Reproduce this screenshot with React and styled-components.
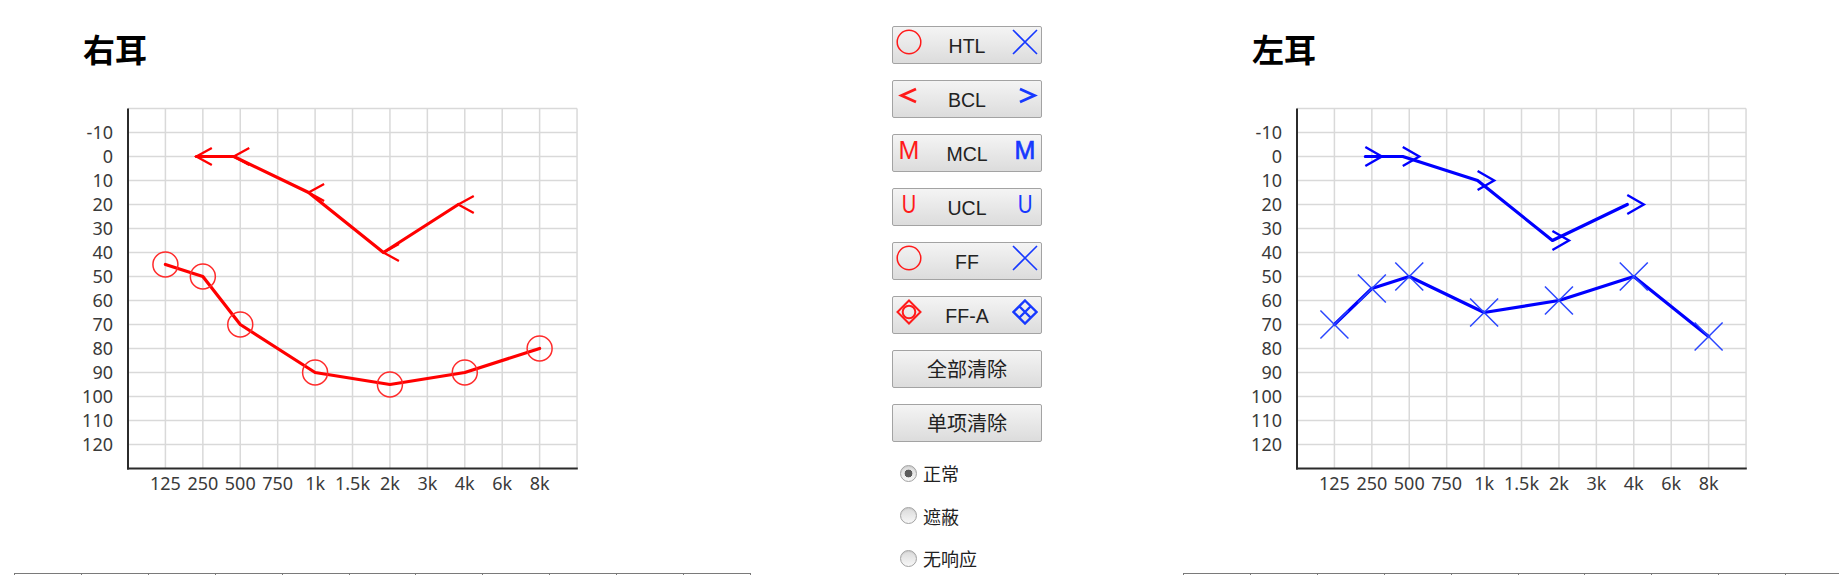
import React from 'react';
import styled, { createGlobalStyle } from 'styled-components';

const GlobalStyle = createGlobalStyle`
  html, body {
    margin: 0;
    padding: 0;
    overflow: hidden;
    background: #ffffff;
  }
  body {
    font-family: "Noto Sans", "Noto Sans CJK SC", sans-serif;
  }
`;

const Page = styled.div`
  display: flex;
  align-items: flex-start;
  gap: 141px;
  padding-left: 14px;
  width: max-content;
`;

const EarPanel = styled.section`
  flex: 0 0 737px;
  display: flex;
  flex-direction: column;
`;

const EarTitle = styled.h2`
  margin: 32px 0 0 69px;
  font-family: "Noto Sans CJK SC", sans-serif;
  font-weight: 700;
  font-size: 32px;
  line-height: 32px;
  color: #000;
`;

const ChartSvg = styled.svg`
  display: block;
  margin-top: 36px;
  width: 600px;
  height: 400px;
  overflow: visible;
`;

const GridLine = styled.line`
  stroke: #d9d9d9;
  stroke-width: 1.5;
`;

const AxisLine = styled.line`
  stroke: #2b2b2b;
  stroke-width: 2;
`;

const AxisLabel = styled.text`
  font-family: "Noto Sans", sans-serif;
  font-size: 18px;
  fill: #3a3a3a;
`;

const Trace = styled.polyline`
  fill: none;
  stroke: ${(p) => p.$color};
  stroke-width: 3.2;
  stroke-linejoin: round;
  stroke-linecap: round;
`;

const MarkerStroke = styled.path`
  fill: none;
  stroke: ${(p) => p.$color};
  stroke-width: ${(p) => p.$w || 1.5};
  stroke-linejoin: miter;
`;

const MarkerCircle = styled.circle`
  fill: none;
  stroke: ${(p) => p.$color};
  stroke-width: 1.5;
`;

const DataTable = styled.table`
  margin-top: 73px;
  border-collapse: collapse;
  table-layout: fixed;
  width: 737px;
`;

const Cell = styled.td`
  border: 1px solid #7a7a7a;
  height: 30px;
  padding: 0;
`;

const ControlColumn = styled.div`
  flex: 0 0 150px;
  display: flex;
  flex-direction: column;
  padding-top: 26px;
`;

const ButtonStack = styled.div`
  display: flex;
  flex-direction: column;
  gap: 16px;
`;

const ToolButton = styled.button`
  box-sizing: border-box;
  width: 150px;
  height: 38px;
  display: flex;
  align-items: center;
  justify-content: ${(p) => (p.$plain ? 'center' : 'space-between')};
  padding: 0 3px;
  border: 1px solid #a3a3a3;
  border-radius: 2px;
  background: linear-gradient(#f4f4f4, #dcdcdc);
  font-family: ${(p) =>
    p.$plain ? '"Noto Sans CJK SC", sans-serif' : '"Liberation Sans", Arial, sans-serif'};
  font-size: ${(p) => (p.$plain ? '20px' : '19.5px')};
  color: #222;
  cursor: pointer;
`;

const ButtonLabel = styled.span`
  flex: 1;
  text-align: center;
  line-height: 1;
  padding-top: ${(p) => (p.$plain ? '0' : '3px')};
`;

const Glyph = styled.span`
  flex: 0 0 26px;
  height: 26px;
  margin-bottom: 6px;
  display: flex;
  align-items: center;
  justify-content: center;
`;

const GlyphLetter = styled.span`
  font-family: "Liberation Sans", Arial, sans-serif;
  font-size: 25px;
  line-height: 1;
  font-weight: 400;
  color: ${(p) => p.$color};
  -webkit-text-stroke: ${(p) => (p.$heavy ? '0.7px' : '0')} ${(p) => p.$color};
  transform: scaleX(${(p) => p.$squeeze || 1});
`;

const RadioGroup = styled.div`
  display: flex;
  flex-direction: column;
  gap: 22px;
  margin-top: 21px;
  padding-left: 7.5px;
`;

const RadioRow = styled.label`
  display: flex;
  align-items: center;
  gap: 6.5px;
  height: 20.5px;
  font-family: "Noto Sans CJK SC", sans-serif;
  font-size: 18px;
  color: #222;
`;

const RadioInput = styled.input.attrs({ type: 'radio' })`
  appearance: none;
  -webkit-appearance: none;
  margin: 0;
  width: 17px;
  height: 17px;
  box-sizing: border-box;
  border-radius: 50%;
  border: 1px solid #a2a2a2;
  background: linear-gradient(#dadada, #f7f7f7);
  box-shadow: inset 0 1px 1px rgba(0, 0, 0, 0.08);
  &:checked {
    background: radial-gradient(circle, #5c5c5c 0 3.6px, transparent 4.2px),
      linear-gradient(#dadada, #f7f7f7);
  }
`;

const RED = '#ff0000';
const BLUE = '#0000ff';
const RED_MARK = '#ff2a2a';
const BLUE_MARK = '#2a46ff';
const ICON_RED = '#ff1a1a';
const ICON_BLUE = '#1638ff';

const FREQS = ['125', '250', '500', '750', '1k', '1.5k', '2k', '3k', '4k', '6k', '8k'];
const DBS = [-10, 0, 10, 20, 30, 40, 50, 60, 70, 80, 90, 100, 110, 120];

const AX = 114;
const TOP = 8.5;
const COL = 37.42;
const PER_DB = 2.4;
const fx = (i) => AX + (i + 1) * COL;
const dy = (db) => TOP + (db + 20) * PER_DB;
const BOTTOM = dy(130);
const RIGHT = AX + 12 * COL;

const EARS = {
  right: {
    title: '右耳',
    color: RED,
    ac: [[0, 45], [1, 50], [2, 70], [4, 90], [6, 95], [8, 90], [10, 80]],
    bc: [[1, 0], [2, 0], [4, 15], [6, 40], [8, 20]],
  },
  left: {
    title: '左耳',
    color: BLUE,
    ac: [[0, 70], [1, 55], [2, 50], [4, 65], [6, 60], [8, 50], [10, 75]],
    bc: [[1, 0], [2, 0], [4, 10], [6, 35], [8, 20]],
  },
};

function Audiogram({ side }) {
  const ear = EARS[side];
  const acPts = ear.ac.map(([i, db]) => [fx(i), dy(db)]);
  const bcPts = ear.bc.map(([i, db]) => [fx(i) - 6.5, dy(db)]);
  const toStr = (pts) => pts.map((p) => p.join(',')).join(' ');

  return (
    <ChartSvg viewBox="0 0 600 400">
      <GridLine x1={AX} y1={TOP} x2={RIGHT} y2={TOP} />
      {DBS.map((db) => (
        <GridLine key={db} x1={AX} y1={dy(db)} x2={RIGHT} y2={dy(db)} />
      ))}
      {FREQS.map((f, i) => (
        <GridLine key={f} x1={fx(i)} y1={TOP} x2={fx(i)} y2={BOTTOM} />
      ))}
      <GridLine x1={RIGHT} y1={TOP} x2={RIGHT} y2={BOTTOM} />
      <AxisLine x1={AX} y1={TOP} x2={AX} y2={BOTTOM + 1} />
      <AxisLine x1={AX - 1} y1={BOTTOM} x2={RIGHT + 0.75} y2={BOTTOM} />

      {DBS.map((db) => (
        <AxisLabel key={db} x={AX - 15} y={dy(db)} dy="0.36em" textAnchor="end">
          {db}
        </AxisLabel>
      ))}
      {FREQS.map((f, i) => (
        <AxisLabel key={f} x={fx(i)} y={BOTTOM + 15.5} dy="0.36em" textAnchor="middle">
          {f}
        </AxisLabel>
      ))}

      <Trace $color={ear.color} points={toStr(bcPts)} />
      <Trace $color={ear.color} points={toStr(acPts)} />

      {side === 'right'
        ? bcPts.map(([x, y], k) => (
            <MarkerStroke
              key={k}
              $color={RED}
              $w={2.3}
              d={`M${x + 15.5},${y - 8.5} L${x},${y} L${x + 15.5},${y + 8.5}`}
            />
          ))
        : bcPts.map(([x, y], k) => (
            <MarkerStroke
              key={k}
              $color={BLUE}
              $w={2.4}
              d={`M${x},${y - 9.5} L${x + 16.5},${y} L${x},${y + 9.5}`}
            />
          ))}

      {side === 'right'
        ? acPts.map(([x, y], k) => <MarkerCircle key={k} $color={RED_MARK} cx={x} cy={y} r={12.5} />)
        : acPts.map(([x, y], k) => (
            <MarkerStroke
              key={k}
              $color={BLUE_MARK}
              d={`M${x - 14},${y - 14} L${x + 14},${y + 14} M${x + 14},${y - 14} L${x - 14},${y + 14}`}
            />
          ))}
    </ChartSvg>
  );
}

function EarSection({ side }) {
  return (
    <EarPanel>
      <EarTitle>{EARS[side].title}</EarTitle>
      <Audiogram side={side} />
      <DataTable>
        <tbody>
          {[0, 1, 2].map((r) => (
            <tr key={r}>
              {FREQS.map((f) => (
                <Cell key={f} />
              ))}
            </tr>
          ))}
        </tbody>
      </DataTable>
    </EarPanel>
  );
}

const IconSvg = ({ children }) => (
  <svg width="26" height="26" viewBox="0 0 26 26">
    {children}
  </svg>
);

const CircleIcon = () => (
  <IconSvg>
    <circle cx="13" cy="13" r="11.8" fill="none" stroke={ICON_RED} strokeWidth="1.5" />
  </IconSvg>
);

const CrossIcon = () => (
  <IconSvg>
    <path d="M1,1 L25,25 M25,1 L1,25" fill="none" stroke={ICON_BLUE} strokeWidth="1.6" />
  </IconSvg>
);

const LessIcon = () => (
  <IconSvg>
    <path d="M20,6 L5.5,12.5 L20,19" fill="none" stroke={ICON_RED} strokeWidth="2.8" />
  </IconSvg>
);

const GreaterIcon = () => (
  <IconSvg>
    <path d="M8,6 L22.5,12.5 L8,19" fill="none" stroke={ICON_BLUE} strokeWidth="2.8" />
  </IconSvg>
);

const DiamondCircleIcon = () => (
  <IconSvg>
    <path d="M13,1.5 L24.5,13 L13,24.5 L1.5,13 Z" fill="none" stroke={ICON_RED} strokeWidth="2" />
    <circle cx="13" cy="13" r="6.3" fill="none" stroke={ICON_RED} strokeWidth="2" />
  </IconSvg>
);

const DiamondGridIcon = () => (
  <IconSvg>
    <path
      d="M13,1.5 L24.5,13 L13,24.5 L1.5,13 Z M7.25,7.25 L18.75,18.75 M18.75,7.25 L7.25,18.75"
      fill="none"
      stroke={ICON_BLUE}
      strokeWidth="2.4"
    />
  </IconSvg>
);

const BUTTONS = [
  { label: 'HTL', left: <CircleIcon />, right: <CrossIcon /> },
  { label: 'BCL', left: <LessIcon />, right: <GreaterIcon /> },
  {
    label: 'MCL',
    left: <GlyphLetter $color={ICON_RED}>M</GlyphLetter>,
    right: <GlyphLetter $color={ICON_BLUE} $heavy>M</GlyphLetter>,
  },
  {
    label: 'UCL',
    left: <GlyphLetter $color={ICON_RED} $squeeze={0.8}>U</GlyphLetter>,
    right: <GlyphLetter $color={ICON_BLUE} $squeeze={0.82}>U</GlyphLetter>,
  },
  { label: 'FF', left: <CircleIcon />, right: <CrossIcon /> },
  { label: 'FF-A', left: <DiamondCircleIcon />, right: <DiamondGridIcon /> },
];

const MODES = ['正常', '遮蔽', '无响应'];

function Controls() {
  return (
    <ControlColumn>
      <ButtonStack>
        {BUTTONS.map((b) => (
          <ToolButton key={b.label} type="button">
            <Glyph>{b.left}</Glyph>
            <ButtonLabel>{b.label}</ButtonLabel>
            <Glyph>{b.right}</Glyph>
          </ToolButton>
        ))}
        <ToolButton type="button" $plain>
          <ButtonLabel $plain>全部清除</ButtonLabel>
        </ToolButton>
        <ToolButton type="button" $plain>
          <ButtonLabel $plain>单项清除</ButtonLabel>
        </ToolButton>
      </ButtonStack>
      <RadioGroup>
        {MODES.map((m, i) => (
          <RadioRow key={m}>
            <RadioInput name="mode" defaultChecked={i === 0} />
            <span>{m}</span>
          </RadioRow>
        ))}
      </RadioGroup>
    </ControlColumn>
  );
}

export default function App() {
  return (
    <>
      <GlobalStyle />
      <Page>
        <EarSection side="right" />
        <Controls />
        <EarSection side="left" />
      </Page>
    </>
  );
}
